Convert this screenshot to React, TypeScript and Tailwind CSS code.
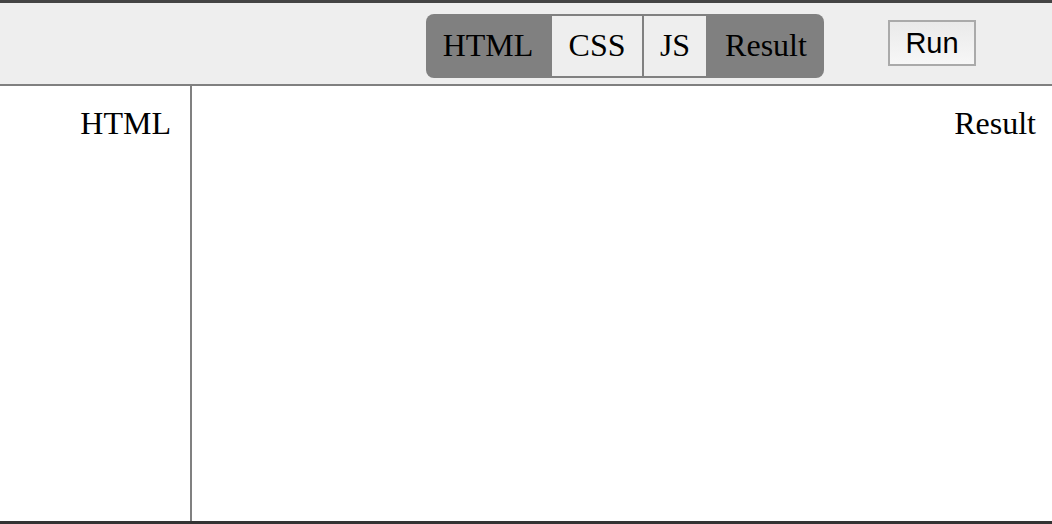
import React from 'react';

const TABS = [
  { label: 'HTML', width: 'w-[124px]', active: true },
  { label: 'CSS', width: 'w-[90px]', active: false },
  { label: 'JS', width: 'w-[62px]', active: false },
  { label: 'Result', width: 'w-[116px]', active: true },
];

const serif = { fontFamily: '"Liberation Serif", "Times New Roman", serif' };

const App: React.FC = () => {
  return (
    <div className="w-[1052px] h-[524px] flex flex-col bg-white text-black border-t-[3px] border-b-[3px] border-t-[#444444] border-b-[#333333]">
      <div className="h-[83px] shrink-0 bg-[#eeeeee] border-b-2 border-[#808080] flex items-start">
        <div className="ml-[426px] mt-[11px] flex gap-[2px] py-[2px] bg-[#808080] rounded-lg" style={serif}>
          {TABS.map((t) => (
            <div
              key={t.label}
              className={`${t.width} h-[60px] pt-[11px] text-center text-[32px] leading-[36px] ${t.active ? 'bg-transparent' : 'bg-[#eeeeee]'}`}
            >
              {t.label}
            </div>
          ))}
        </div>
        <button
          className="ml-[64px] mt-[17px] w-[88px] h-[46px] border-2 border-[#aaaaaa] bg-gradient-to-b from-[#eaeaea] to-[#f7f7f7] text-[29px] leading-[40px]"
          style={{ fontFamily: '"Liberation Sans", Arial, sans-serif' }}
        >
          Run
        </button>
      </div>
      <div className="flex-1 flex min-h-0" style={serif}>
        <div className="w-[192px] shrink-0 border-r-2 border-[#808080] text-right pr-[19px] pt-[19px] text-[32px] leading-[36px]">
          HTML
        </div>
        <div className="flex-1 text-right pr-[16px] pt-[19px] text-[32px] leading-[36px]">Result</div>
      </div>
    </div>
  );
};

export default App;
